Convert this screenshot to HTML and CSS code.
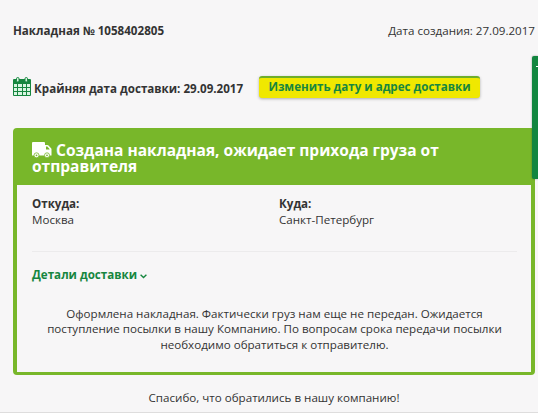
FILE: index.html
```html
<!DOCTYPE html>
<html lang="ru">
<head>
  <meta charset="UTF-8">
  <meta name="viewport" content="width=device-width, initial-scale=1.0">
  <title>Накладная № 1058402805</title>
  <link rel="stylesheet" href="styles.css">
</head>
<body>
  <div class="page">
    <div class="invoice-head">
      <strong class="invoice-number">Накладная № 1058402805</strong>
      <span class="created">Дата создания: 27.09.2017</span>
    </div>

    <div class="deadline">
      <svg class="calendar" viewBox="0 0 18 19" width="18" height="19">
        <path fill="#16863f" d="M1 2h16q1 0 1 1v15q0 1-1 1H1q-1 0-1-1V3q0-1 1-1z"/>
        <path fill="#d9f5e2" d="M1 7h3v3H1zM5 7h4v3H5zM10 7h3v3h-3zM14 7h3v3h-3zM1 11h3v3H1zM5 11h4v3H5zM10 11h3v3h-3zM14 11h3v3h-3zM1 15h3v3H1zM5 15h4v3H5zM10 15h3v3h-3zM14 15h3v3h-3z"/>
        <rect x="3.5" y=".5" width="2.5" height="4.5" rx="1.2" fill="#d9f5e2" stroke="#16863f"/>
        <rect x="12" y=".5" width="2.5" height="4.5" rx="1.2" fill="#d9f5e2" stroke="#16863f"/>
      </svg>
      <strong class="deadline-text">Крайняя дата доставки: 29.09.2017</strong>
      <button class="btn">Изменить дату и адрес доставки</button>
    </div>

    <div class="card">
      <h1 class="card-title">
        <svg class="truck" viewBox="0 0 20 16" width="20" height="16">
          <path fill="#fff" d="M1 0h11q1 0 1 1v2h2.5q.6 0 1 .4l2.6 2.8q.4.4.4 1V13.5H0V1q0-1 1-1z"/>
          <path fill="#78b72a" d="M14 4.5h1.3l2.2 2.5v.5H14z"/>
          <circle cx="4.5" cy="13.3" r="2.5" fill="#fff" stroke="#78b72a" stroke-width=".8"/>
          <circle cx="15" cy="13.3" r="2.5" fill="#fff" stroke="#78b72a" stroke-width=".8"/>
          <circle cx="4.5" cy="13.3" r=".9" fill="#78b72a"/>
          <circle cx="15" cy="13.3" r=".9" fill="#78b72a"/>
        </svg>
        Создана накладная, ожидает прихода груза от отправителя
      </h1>
      <div class="card-body">
        <div class="route">
          <div><strong>Откуда:</strong><br>Москва</div>
          <div><strong>Куда:</strong><br>Санкт-Петербург</div>
        </div>
        <div class="details">
          Детали доставки
          <svg class="chevron" viewBox="0 0 7 5" width="7" height="5">
            <path fill="none" stroke="#16863f" stroke-width="1.4" d="M.6.8l2.9 2.7L6.4.8"/>
          </svg>
        </div>
        <p class="message">Оформлена накладная. Фактически груз нам еще не передан. Ожидается поступление посылки в нашу Компанию. По вопросам срока передачи посылки необходимо обратиться к отправителю.</p>
      </div>
    </div>

    <p class="thanks">Спасибо, что обратились в нашу компанию!</p>
  </div>
  <div class="side-tab"></div>
</body>
</html>
```

FILE: styles.css
```css
* {
  margin: 0;
  padding: 0;
  box-sizing: border-box;
}

body {
  height: 413px;
  overflow: hidden;
  background: #f7f6f7;
  border-bottom: 1px solid #dedddd;
  color: #333;
  font-family: 'Open Sans', 'Noto Sans', sans-serif;
  font-size: 11.6px;
  line-height: 15.5px;
}

.page {
  padding: 23px 3px 0 13px;
}

.invoice-head {
  display: flex;
  justify-content: space-between;
  height: 53px;
}

.deadline {
  display: flex;
  height: 52px;
}

.calendar {
  margin: 1px 3px 0 0;
}

.deadline-text {
  width: 210px;
  margin-top: 5px;
  white-space: nowrap;
}

.btn {
  width: 221px;
  height: 22px;
  margin-left: 15px;
  padding-bottom: 2px;
  background: #f0e800;
  border: none;
  border-top: 2px solid #6fae2a;
  border-radius: 3px;
  box-shadow: 0 1px 3px rgba(0, 0, 0, 0.3);
  color: #16863f;
  font: bold 11.6px/18px 'Open Sans', 'Noto Sans', sans-serif;
  white-space: nowrap;
}

.card {
  height: 247px;
  border: 4px solid #78b72a;
  border-bottom-width: 3px;
  border-radius: 4px;
}

.card-title {
  height: 53px;
  padding: 11px 80px 0 15px;
  background: #78b72a;
  color: #fff;
  font-size: 15.5px;
  line-height: 15.5px;
}

.truck {
  margin-top: -2px;
  vertical-align: -2px;
}

.card-body {
  padding: 11px 14px 0 15px;
}

.route {
  display: grid;
  grid-template-columns: 247px 1fr;
  height: 56px;
  border-bottom: 1px solid #ecebec;
}

.details {
  margin-top: 15px;
  color: #16863f;
  font-weight: bold;
}

.message {
  margin-top: 23px;
  text-align: center;
}

.thanks {
  margin-top: 15px;
  text-align: center;
}

/* feedback tab stuck to the right edge */
.side-tab {
  position: absolute;
  top: 56px;
  right: 0;
  width: 6px;
  height: 123px;
  background: #12863f;
  border-radius: 2px 0 0 2px;
  box-shadow: 0 0 2px rgba(0, 0, 0, 0.4);
}

.side-tab::before {
  content: '';
  display: block;
  width: 2px;
  height: 1px;
  margin: 10px 0 0 4px;
  background: #fff;
}
```
